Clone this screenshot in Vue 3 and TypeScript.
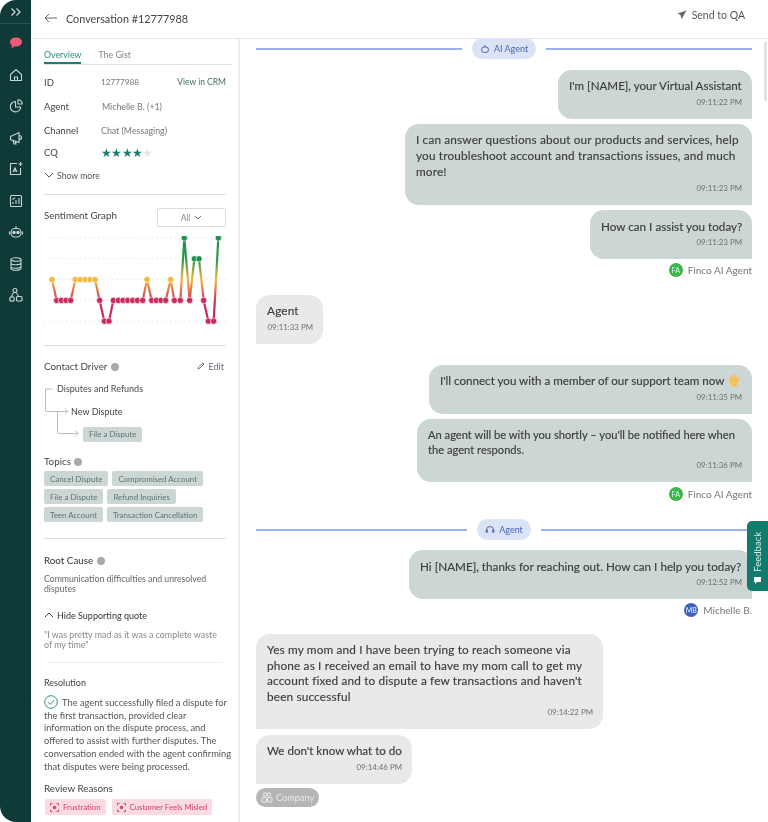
<script setup lang="ts">
const zx: number[] = [66,80,94,108,122,136,150,165,180,195,209,223,237,250,265,279,293,308,322,338,351,365,379,393,407,422,433,451,463,479,493,507,521,535,551,565]
const lv: number[] = [3,4,4,4,4,3,3,3,3,3,4,5,5,4,4,4,4,4,4,4,3,4,4,4,4,3,4,4,1,4,2,2,4,5,5,1]
const ly = (l: number) => 2 + (l - 1) * 20.8
const pts = zx.map((z, i) => ({ x: z / 3 + 30 - 44, y: ly(lv[i]), c: lv[i] <= 2 ? '#1c9150' : lv[i] === 3 ? '#f5b73c' : '#c92a5c' }))
const poly = pts.map(p => `${p.x},${p.y}`).join(' ')
const grid = [1, 2, 3, 4, 5].map(ly)
const topics = ['Cancel Dispute', 'Compromised Account', 'File a Dispute', 'Refund Inquiries', 'Teen Account', 'Transaction Cancellation']
</script>

<template>
  <div class="app">
    <nav class="rail">
      <div class="rail-top">
        <svg width="12" height="10" viewBox="0 0 12 10" fill="none" stroke="#c8d6d3" stroke-width="1.3"><path d="M1.5 1.5 5 5 1.5 8.5M6.5 1.5 10 5 6.5 8.5"/></svg>
      </div>
      <svg class="ri first" viewBox="0 0 16 16"><path d="M8 2.5c3.6 0 6 1.9 6 4.5s-2.4 4.5-6 4.5c-.6 0-1.1 0-1.6-.1L3.5 13.5l.4-3C2.7 9.6 2 8.4 2 7c0-2.6 2.4-4.5 6-4.500z" fill="#ee5b78"/></svg>
      <svg class="ri" viewBox="0 0 16 16" fill="none" stroke="#c8d6d3" stroke-width="1.1"><path d="M2.5 7.500 8 2.500l5.500 5v6h-11zM6.500 13.500v-3.500h3v3.500"/></svg>
      <svg class="ri" viewBox="0 0 16 16" fill="none" stroke="#c8d6d3" stroke-width="1.1"><path d="M7.500 3.500a5.200 5.200 0 1 0 5.200 5.500H7.500z"/><path d="M10 1.800a4 4 0 0 1 4.200 4.200H10z"/></svg>
      <svg class="ri" viewBox="0 0 16 16" fill="none" stroke="#c8d6d3" stroke-width="1.1"><path d="M2.500 6.500 11 2.500v10l-8.500-3zM5 10.500l1 3.500h2l-.8-2.700M11 5.500c1.600 0 2.500 1 2.500 2s-.9 2-2.500 2"/></svg>
      <svg class="ri" viewBox="0 0 16 16" fill="none" stroke="#c8d6d3" stroke-width="1.1"><path d="M9 2.500H2.500v11h10V7"/><path d="M12.500 1v4M10.500 3h4M5 11l2-4 2 4M5.500 10h3"/></svg>
      <svg class="ri" viewBox="0 0 16 16" fill="none" stroke="#c8d6d3" stroke-width="1.1"><rect x="2.500" y="2.500" width="11" height="11" rx="1"/><path d="M5 11V9M8 11V7M11 11V5M4.500 6.500 7 4.800"/></svg>
      <svg class="ri" viewBox="0 0 16 16" fill="none" stroke="#c8d6d3" stroke-width="1.1"><path d="M8 2v2"/><rect x="3" y="4.500" width="10" height="8.500" rx="4"/><circle cx="6" cy="8.500" r="1.200" fill="#c8d6d3"/><circle cx="10" cy="8.500" r="1.200" fill="#c8d6d3"/><path d="M1.500 7.500v3M14.500 7.500v3"/></svg>
      <svg class="ri" viewBox="0 0 16 16" fill="none" stroke="#c8d6d3" stroke-width="1.1"><ellipse cx="8" cy="3.500" rx="5" ry="1.800"/><path d="M3 3.500v9c0 1 2.200 1.800 5 1.800s5-.8 5-1.800v-9M3 7c0 1 2.200 1.800 5 1.800S13 8 13 7M3 10.500c0 1 2.200 1.800 5 1.800s5-.8 5-1.800"/></svg>
      <svg class="ri" viewBox="0 0 16 16" fill="none" stroke="#c8d6d3" stroke-width="1.1"><circle cx="7" cy="3.500" r="2"/><path d="M5.500 6 3 10M8.500 6l2 3"/><circle cx="4" cy="12" r="2.300"/><rect x="8.500" y="9.500" width="5.500" height="4.500" rx="1"/></svg>
    </nav>

    <div class="content">
      <header class="top">
        <div class="top-left">
          <svg width="14" height="10" viewBox="0 0 14 10" fill="none" stroke="#666" stroke-width="1"><path d="M13 5H1M5 1 1 5l4 4"/></svg>
          <span class="title">Conversation #12777988</span>
        </div>
        <div class="send">
          <svg width="10" height="10" viewBox="0 0 10 10" fill="#666"><path d="M9.500.5 .5 3.500l3 1.500 1 4z"/></svg>
          <span>Send to QA</span>
        </div>
      </header>

      <div class="body">
        <aside class="panel">
          <div class="tabs">
            <span class="tab active">Overview</span>
            <span class="tab">The Gist</span>
          </div>

          <div class="row r-id"><span class="lbl">ID</span><span class="val idv">12777988</span><span class="crm">View in CRM</span></div>
          <div class="row r-agent"><span class="lbl">Agent</span><span class="val">Michelle B. (+1)</span></div>
          <div class="row r-chan"><span class="lbl">Channel</span><span class="val">Chat (Messaging)</span></div>
          <div class="row r-cq">
            <span class="lbl">CQ</span>
            <span class="stars"><i v-for="n in 4" :key="n">★</i><i class="off">★</i></span>
          </div>
          <div class="more">
            <svg width="10" height="6" viewBox="0 0 10 6" fill="none" stroke="#555" stroke-width="1"><path d="m1 1 4 4 4-4"/></svg>
            <span>Show more</span>
          </div>
          <hr class="sep s1" />

          <div class="graph-head">
            <span class="h">Sentiment Graph</span>
            <div class="select">All <svg width="8" height="5" viewBox="0 0 8 5" fill="none" stroke="#777" stroke-width="1"><path d="m1 1 3 3 3-3"/></svg></div>
          </div>
          <svg class="chart" width="182" height="90" viewBox="0 0 182 90">
            <defs>
              <linearGradient id="sent" gradientUnits="userSpaceOnUse" x1="0" y1="2" x2="0" y2="85">
                <stop offset="0" stop-color="#13904f"/>
                <stop offset="0.28" stop-color="#3c9a4c"/>
                <stop offset="0.5" stop-color="#f5b73c"/>
                <stop offset="0.78" stop-color="#c92a5c"/>
                <stop offset="1" stop-color="#c92a5c"/>
              </linearGradient>
            </defs>
            <line v-for="g in grid" :key="g" x1="0" x2="182" :y1="g" :y2="g" stroke="#e6e6e6" stroke-width="1" stroke-dasharray="1.500 3"/>
            <polyline :points="poly" fill="none" stroke="url(#sent)" stroke-width="2.2"/>
            <circle v-for="(p, i) in pts" :key="i" :cx="p.x" :cy="p.y" r="3.100" :fill="p.c" stroke="#fff" stroke-width="0.6"/>
          </svg>
          <hr class="sep s2" />

          <div class="cd-head">
            <span class="h">Contact Driver <i class="info"></i></span>
            <span class="edit">
              <svg width="8" height="8" viewBox="0 0 8 8" fill="none" stroke="#777" stroke-width="1"><path d="M1 7l.5-2L6 1l1 1-4.500 4.500z"/></svg>
              Edit
            </span>
          </div>
          <div class="tree">
            <svg class="tree-lines" width="40" height="54" viewBox="0 0 40 54" fill="none" stroke="#b5bfbd" stroke-width="1">
              <path d="M8.500 1H1.500v21c0 1 .6 1.500 1.500 1.500h20M21 20.500l3 3-3 3"/>
              <path d="M13.500 24v20c0 1 .6 1.500 1.500 1.500h19M31 42.500l3 3-3 3"/>
            </svg>
            <div class="t1">Disputes and Refunds</div>
            <div class="t2">New Dispute</div>
            <div class="t3"><span class="tag">File a Dispute</span></div>
          </div>

          <div class="h topics-h">Topics <i class="info"></i></div>
          <div class="tags">
            <span v-for="t in topics" :key="t" class="tag">{{ t }}</span>
          </div>
          <hr class="sep s3" />

          <div class="h root-h">Root Cause <i class="info"></i></div>
          <p class="txt root-t">Communication difficulties and unresolved disputes</p>
          <div class="more hide">
            <svg width="10" height="6" viewBox="0 0 10 6" fill="none" stroke="#444" stroke-width="1"><path d="m1 5 4-4 4 4"/></svg>
            <span>Hide Supporting quote</span>
          </div>
          <p class="txt quote">"I was pretty mad as it was a complete waste<br />of my time"</p>
          <hr class="sep s4" />

          <div class="h res-h">Resolution</div>
          <p class="res">
            <svg class="check" width="14" height="14" viewBox="0 0 14 14" fill="none" stroke="#2f8f80" stroke-width="1"><circle cx="7" cy="7" r="6.300"/><path d="m4 7.200 2.200 2.200L10.200 5"/></svg>
            The agent successfully filed a dispute for<br />the first transaction, provided clear<br />information on the dispute process, and<br />offered to assist with further disputes. The<br />conversation ended with the agent confirming<br />that disputes were being processed.
          </p>
          <div class="h rev-h">Review Reasons</div>
          <div class="reasons">
            <span class="reason">
              <svg width="9" height="9" viewBox="0 0 9 9" fill="none" stroke="#d8406a" stroke-width="1"><path d="M.5 2.500v-2h2M6.500.5h2v2M8.500 6.500v2h-2M2.500 8.500h-2v-2"/><circle cx="4.500" cy="4.500" r="1.300" fill="#d8406a"/></svg>
              Frustration
            </span>
            <span class="reason">
              <svg width="9" height="9" viewBox="0 0 9 9" fill="none" stroke="#d8406a" stroke-width="1"><path d="M.5 2.500v-2h2M6.500.5h2v2M8.500 6.500v2h-2M2.500 8.500h-2v-2"/><circle cx="4.500" cy="4.500" r="1.300" fill="#d8406a"/></svg>
              Customer Feels Misled
            </span>
          </div>
        </aside>

        <main class="chat">
          <div class="divider d1">
            <span class="line"></span>
            <span class="pill">
              <svg width="10" height="10" viewBox="0 0 10 10" fill="none" stroke="#4a66b8" stroke-width="1"><path d="M5 1v2"/><rect x="1.500" y="3" width="7" height="5.500" rx="2.700"/></svg>
              AI Agent
            </span>
            <span class="line"></span>
          </div>

          <div class="msg out w1"><p>I'm [NAME], your Virtual Assistant</p><time>09:11:22 PM</time></div>
          <div class="msg out w2"><p>I can answer questions about our products and services, help you troubleshoot account and transactions issues, and much more!</p><time>09:11:23 PM</time></div>
          <div class="msg out w3"><p>How can I assist you today?</p><time>09:11:23 PM</time></div>
          <div class="sender s-a"><span class="av green">FA</span>Finco AI Agent</div>

          <div class="msg in w4"><p>Agent</p><time>09:11:33 PM</time></div>

          <div class="msg out w5"><p>I'll connect you with a member of our support team now
            <svg class="wave" width="15" height="15" viewBox="0 0 15 15"><path d="M3 8 2 4.500l1.500-.5L5 6.500 4.500 2.500 6 2l1.200 3.500L7.500 1.500 9 1.700l.5 4L11 3.500l1.300.7-1 5c-.4 3-2.300 4.800-4.800 4.800C4.500 14 3.500 11 3 8z" fill="#f4c05a"/></svg></p><time>09:11:35 PM</time></div>
          <div class="msg out w6"><p>An agent will be with you shortly – you'll be notified here when the agent responds.</p><time>09:11:36 PM</time></div>
          <div class="sender s-b"><span class="av green">FA</span>Finco AI Agent</div>

          <div class="divider d2">
            <span class="line"></span>
            <span class="pill">
              <svg width="10" height="10" viewBox="0 0 10 10" fill="none" stroke="#4a66b8" stroke-width="1"><path d="M1.500 6V5a3.500 3.500 0 0 1 7 0v1"/><rect x="1" y="5" width="1.500" height="2.500" rx=".5"/><rect x="7.500" y="5" width="1.500" height="2.500" rx=".5"/></svg>
              Agent
            </span>
            <span class="line"></span>
          </div>

          <div class="msg out w7"><p>Hi [NAME], thanks for reaching out. How can I help you today?</p><time>09:12:52 PM</time></div>
          <div class="sender s-c"><span class="av blue">MB</span>Michelle B.</div>

          <div class="msg in w8"><p>Yes my mom and I have been trying to reach someone via phone as I received an email to have my mom call to get my account fixed and to dispute a few transactions and haven't been successful</p><time>09:14:22 PM</time></div>
          <div class="msg in w9"><p>We don't know what to do</p><time>09:14:46 PM</time></div>
          <span class="company">
            <svg width="12" height="11" viewBox="0 0 12 11" fill="none" stroke="#eee" stroke-width="1"><circle cx="4" cy="2.500" r="1.700"/><circle cx="8" cy="2.500" r="1.700"/><rect x="1" y="5.500" width="4.500" height="4.500" rx="1"/><rect x="6.500" y="5.500" width="4.500" height="4.500" rx="1"/></svg>
            Company
          </span>

          <span class="scroll"></span>
          <div class="feedback">
            <svg width="9" height="9" viewBox="0 0 9 9" fill="#fff"><path d="M1 1h7v5H4L2 8V6H1z"/></svg>
            <span>Feedback</span>
          </div>
        </main>
      </div>
    </div>
  </div>
</template>

<style>
html, body { margin: 0; background: #fff; }
</style>

<style scoped>
.app {
  width: 768px; height: 822px; overflow: hidden; display: flex; background: #fff;
  font-family: Lato, "Noto Sans", sans-serif; color: #4a4a4a; filter: blur(0.45px);
}
.rail {
  width: 31px; flex: none; background: #0e3a38; border-radius: 16px 0 0 16px;
  display: flex; flex-direction: column; align-items: center;
}
.rail-top { width: 100%; height: 24px; border-bottom: 1px solid #2d5452; display: flex; justify-content: center; align-items: center; box-sizing: border-box; }
.ri { width: 16px; height: 16px; margin-top: 15.5px; flex: none; }
.ri.first { margin-top: 11px; }
.content { flex: 1; min-width: 0; display: flex; flex-direction: column; }
.top { height: 38px; flex: none; border-bottom: 1px solid #e6e6e6; display: flex; justify-content: space-between; align-items: center; }
.top-left { display: flex; align-items: center; gap: 8px; margin-left: 13px; margin-bottom: 2px; }
.title { font-size: 10.8px; color: #444; }
.send { display: flex; align-items: center; gap: 5px; margin-right: 23px; margin-bottom: 8px; font-size: 10.5px; color: #555; }
.body { flex: 1; display: flex; min-height: 0; }
.panel { width: 209px; flex: none; box-sizing: border-box; border-right: 2px solid #ececec; padding: 0 12px 0 13px; font-size: 9.5px; }
.tabs { display: flex; gap: 17px; height: 26px; border-bottom: 1px solid #dfe3e2; margin-right: -6px; align-items: flex-end; box-sizing: border-box; }
.tab { height: 15px; line-height: 12px; color: #888; font-size: 8.8px; box-sizing: border-box; }
.tab.active { color: #2a8a79; border-bottom: 2px solid #1a7f6e; }
.row { display: flex; align-items: center; height: 14px; }
.lbl { width: 57px; flex: none; color: #444; font-size: 9.5px; }
.val { color: #777; font-size: 8.8px; }
.idv { font-size: 8.2px; }
.crm { margin-left: auto; color: #3e6f67; font-size: 8.5px; }
.r-id { margin-top: 10px; }
.r-agent { margin-top: 10px; }
.r-agent .val { margin-left: 1px; }
.r-chan { margin-top: 10px; }
.r-cq { margin-top: 8px; }
.stars { display: flex; font-size: 11.5px; color: #1a7f6e; line-height: 14px; margin-top: 2px; }
.stars i { font-style: normal; width: 10.3px; text-align: center; }
.stars i.off { color: #dbe8e6; }
.more { display: flex; align-items: center; gap: 3px; margin-top: 9px; height: 14px; color: #555; font-size: 8.7px; }
.sep { border: 0; border-top: 1px solid #ddd; margin: 0; }
.s1 { margin-top: 12px; }
.graph-head { display: flex; justify-content: space-between; align-items: flex-start; margin-top: 13px; height: 19px; }
.graph-head .h { line-height: 14px; }
.h { font-size: 9.8px; color: #444; }
.select { width: 69px; height: 19px; box-sizing: border-box; border: 1px solid #ddd; border-radius: 2px; display: flex; align-items: center; justify-content: center; gap: 4px; color: #888; font-size: 8.5px; }
.chart { display: block; margin-top: 9px; }
.s2 { margin-top: 19px; }
.cd-head { display: flex; justify-content: space-between; align-items: center; margin-top: 13px; height: 14px; padding-right: 2px; }
.info { display: inline-block; width: 8px; height: 8px; border-radius: 50%; background: #aaa; vertical-align: -1px; margin-left: 1px; }
.edit { display: flex; align-items: center; gap: 4px; font-size: 9px; color: #667; }
.tree { position: relative; margin-top: 10px; height: 58.5px; font-size: 9px; }
.tree-lines { position: absolute; left: 0; top: 5px; }
.t1 { position: relative; padding-left: 13px; height: 12px; line-height: 12px; }
.t2 { position: relative; padding-left: 27px; margin-top: 11px; height: 12px; line-height: 12px; color: #444; }
.t3 { position: relative; padding-left: 39px; margin-top: 8.5px; height: 15px; }
.tag { display: inline-flex; align-items: center; height: 15px; padding: 0 6px; background: #ccd6d4; border-radius: 2px; font-size: 7.9px; color: #5b7673; white-space: nowrap; }
.topics-h { margin-top: 13.5px; height: 14px; }
.tags { display: flex; flex-wrap: wrap; gap: 3px 4px; margin-top: 2px; width: 170px; }
.s3 { margin-top: 16px; }
.root-h { margin-top: 15px; height: 14px; color: #333; }
.txt { margin: 6px 0 0; font-size: 8.7px; line-height: 10px; color: #666; }
.hide { margin-top: 14px; color: #333; font-size: 9px; }
.quote { margin-top: 8px; color: #888; font-size: 8.9px; }
.s4 { margin: 12px 3px 0; border-color: #eee; }
.res-h { margin-top: 14px; font-size: 9px; height: 12px; }
.res { margin: 6px -10px 0 0; font-size: 9.3px; line-height: 12.7px; color: #555; white-space: nowrap; }
.check { vertical-align: -3px; margin-right: 2px; }
.rev-h { margin-top: 9px; height: 14px; }
.reasons { display: flex; gap: 6px; margin-top: 3px; margin-left: 1px; }
.reason { display: inline-flex; align-items: center; gap: 4px; height: 16px; padding: 0 5px; background: #fbdbe2; border-radius: 2px; color: #d8406a; font-size: 7.8px; white-space: nowrap; }
.chat { position: relative; flex: 1; min-width: 0; padding: 0 16px; display: flex; flex-direction: column; align-items: flex-end; overflow: hidden; font-size: 11.5px; }
.divider { width: 100%; display: flex; align-items: center; gap: 10px; flex: none; }
.line { flex: 1; height: 2px; background: #9ab2ea; }
.pill { display: inline-flex; align-items: center; gap: 4px; height: 21px; padding: 0 8px; border-radius: 11px; background: #dbe3f6; color: #4a66b8; font-size: 9px; }
.d1 { margin-top: -1px; }
.msg { flex: none; box-sizing: border-box; background: #ccd6d4; border-radius: 14px 14px 0 14px; padding: 8px 10px 8px 11px; margin-top: 5px; font-size: 11.8px; color: #3d3d3d; letter-spacing: .15px; }
.msg p { margin: 0; line-height: 16px; -webkit-text-stroke: .15px #3d3d3d; }
.msg time { display: block; text-align: right; font-size: 7.9px; line-height: 17px; color: #6f6f6f; letter-spacing: 0; white-space: nowrap; }
.msg.in { background: #e9e9e9; align-self: flex-start; border-radius: 14px 14px 14px 0; }
.w1 { width: 194px; margin-top: 11px; font-size: 11.6px; letter-spacing: 0; white-space: nowrap; }
.w2 { width: 347px; }
.w3 { width: 162px; font-size: 11.7px; letter-spacing: 0; white-space: nowrap; }
.sender { flex: none; display: flex; align-items: center; gap: 5px; height: 14px; margin-top: 4px; font-size: 10px; color: #777; }
.av { width: 14px; height: 14px; border-radius: 50%; color: #dff; font-size: 7px; display: flex; align-items: center; justify-content: center; }
.green { background: #3fb54a; }
.blue { background: #3e5fc0; }
.w4 { width: 67px; margin-top: 18px; }
.w5 { width: 323px; margin-top: 21px; font-size: 11.6px; letter-spacing: 0; }
.w5 p { white-space: nowrap; }
.wave { vertical-align: -3px; }
.w6 { width: 335px; font-size: 11.15px; letter-spacing: 0; }
.w6 p { line-height: 15px; }
.s-b { margin-top: 5px; }
.d2 { margin-top: 18px; }
.w7 { width: 343px; margin-top: 10px; font-size: 11.7px; letter-spacing: 0; white-space: nowrap; }
.w8 { width: 347px; margin-top: 17px; }
.w8 p { line-height: 15.5px; }
.w9 { width: 156px; margin-top: 6px; font-size: 11.6px; letter-spacing: 0; white-space: nowrap; }
.company { align-self: flex-start; flex: none; margin-top: 4px; display: inline-flex; align-items: center; gap: 3px; height: 19px; padding: 0 5px; border-radius: 10px; background: #b5b5b5; color: #e8e8e8; font-size: 9.2px; }
.scroll { position: absolute; right: 1px; top: 2px; width: 3px; height: 60px; background: #e2e2e2; border-radius: 2px; }
.feedback { position: absolute; right: 0; top: 482px; width: 21px; height: 70px; background: #137b6d; border-radius: 5px 0 0 5px; color: #d9ece8; display: flex; flex-direction: column-reverse; align-items: center; justify-content: flex-start; gap: 4px; padding: 8px 0 6px; box-sizing: border-box; font-size: 9.5px; }
.feedback span { writing-mode: vertical-rl; transform: rotate(180deg); }
</style>
